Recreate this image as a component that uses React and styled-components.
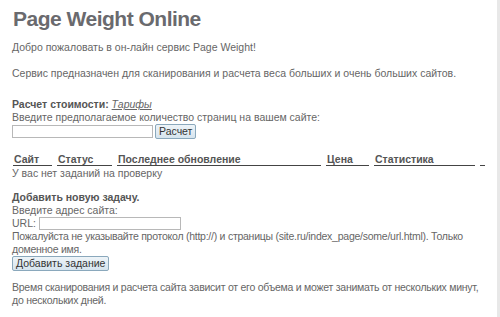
import React from "react";
import styled, { createGlobalStyle } from "styled-components";

const Global = createGlobalStyle`
  html, body { margin: 0; padding: 0; background: #fff; }
  body { font-family: "Liberation Sans", Arial, sans-serif; color: #666; }
`;

const Shell = styled.div`
  display: flex;
  min-height: 317px;
  width: 500px;
`;

const Main = styled.main`
  flex: 1;
  padding: 6px 0 0 12px;
  font-size: 10.5px;
  line-height: 13px;
`;

const Edge = styled.div`
  width: 3px;
  background: #e8e8e8;
`;

const Title = styled.h1`
  margin: 0 0 9px 1px;
  font-size: 21px;
  line-height: 26px;
  font-weight: bold;
  color: #6a6a6e;
  letter-spacing: -0.5px;
`;

const P = styled.p`
  margin: ${(p) => p.$mt || 0}px 0 ${(p) => p.$mb || 0}px;
  letter-spacing: ${(p) => (p.$tight ? "-0.25px" : "normal")};
`;

const Strong = styled.span`
  font-weight: bold;
  color: #555;
`;

const Link = styled.a`
  font-style: italic;
  color: #666;
  text-decoration: underline;
`;

const FormRow = styled.div`
  display: flex;
  align-items: center;
  gap: ${(p) => p.$gap || 2}px;
`;

const Input = styled.input`
  box-sizing: border-box;
  width: ${(p) => p.$w}px;
  height: 13px;
  border: 1px solid #b8b8b8;
  padding: 0;
  background: #fff;
`;

const Button = styled.button`
  box-sizing: border-box;
  height: 15px;
  padding: 0 3px;
  font-family: "Liberation Sans", Arial, sans-serif;
  font-size: 10.5px;
  line-height: 13px;
  color: #333;
  background: linear-gradient(#eef4f8, #d6e4ee);
  border: 1px solid #8aa8bc;
  border-radius: 2px;
`;

const Table = styled.table`
  border-collapse: separate;
  border-spacing: 5px 0;
  margin: 14px 0 1px -4px;
`;

const Th = styled.th`
  text-align: left;
  font-weight: bold;
  color: #555;
  padding: 0 0 0 1px;
  font-size: 10.5px;
  line-height: 12px;
  border-bottom: 1px solid #444;
  width: ${(p) => p.$w}px;
`;

export default function App() {
  return (
    <>
      <Global />
      <Shell>
        <Main>
          <Title>Page Weight Online</Title>
          <P $mb={13}>Добро пожаловать в он-лайн сервис Page Weight!</P>
          <P $mb={18}>
            Сервис предназначен для сканирования и расчета веса больших и очень больших сайтов.
          </P>
          <P>
            <Strong>Расчет стоимости:</Strong> <Link href="#">Тарифы</Link>
          </P>
          <P>Введите предполагаемое количество страниц на вашем сайте:</P>
          <FormRow>
            <Input $w={141} />
            <Button>Расчет</Button>
          </FormRow>
          <Table>
            <thead>
              <tr>
                <Th $w={38}>Сайт</Th>
                <Th $w={54}>Статус</Th>
                <Th $w={203}>Последнее обновление</Th>
                <Th $w={42}>Цена</Th>
                <Th $w={100}>Статистика</Th>
                <Th $w={4}></Th>
              </tr>
            </thead>
          </Table>
          <P $mb={11}>У вас нет заданий на проверку</P>
          <P>
            <Strong>Добавить новую задачу.</Strong>
          </P>
          <P>Введите адрес сайта:</P>
          <FormRow $gap={3}>
            URL: <Input $w={142} />
          </FormRow>
          <P $tight>
            Пожалуйста не указывайте протокол (http://) и страницы (site.ru/index_page/some/url.html). Только
            доменное имя.
          </P>
          <FormRow>
            <Button>Добавить задание</Button>
          </FormRow>
          <P $mt={10} $tight>
            Время сканирования и расчета сайта зависит от его объема и может занимать от нескольких минут,
            <br />
            до нескольких дней.
          </P>
        </Main>
        <Edge />
      </Shell>
    </>
  );
}
